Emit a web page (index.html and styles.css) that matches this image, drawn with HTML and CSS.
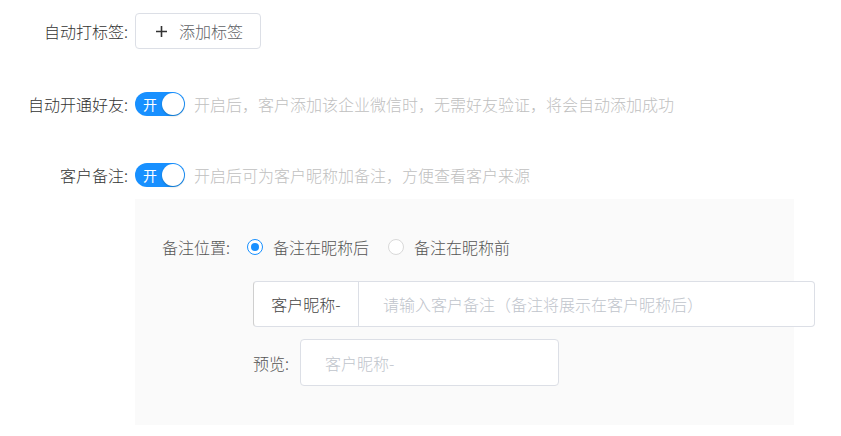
FILE: index.html
```html
<!DOCTYPE html>
<html lang="zh-CN">
<head>
<meta charset="utf-8">
<title>设置</title>
<link rel="stylesheet" href="styles.css">
</head>
<body>
<div class="form">
  <div class="item item-first">
    <div class="label">自动打标签:</div>
    <div class="content">
      <button class="btn" type="button">
        <svg class="plus" width="11" height="11" viewBox="0 0 11 11"><path d="M5.5 0V11M0 5.5H11" stroke="#333" stroke-width="1.6" fill="none"/></svg>
        <span>添加标签</span>
      </button>
    </div>
  </div>

  <div class="item item-second">
    <div class="label">自动开通好友:</div>
    <div class="content">
      <div class="line">
        <span class="switch"><span class="switch-text">开</span><span class="knob"></span></span>
        <span class="hint">开启后，客户添加该企业微信时，无需好友验证，将会自动添加成功</span>
      </div>
    </div>
  </div>

  <div class="item item-last">
    <div class="label">客户备注:</div>
    <div class="content">
      <div class="line">
        <span class="switch"><span class="switch-text">开</span><span class="knob"></span></span>
        <span class="hint">开启后可为客户昵称加备注，方便查看客户来源</span>
      </div>
      <div class="panel">
        <div class="radio-row">
          <span class="sub-label">备注位置:</span>
          <label class="radio checked"><span class="dot"></span><span>备注在昵称后</span></label>
          <label class="radio"><span class="dot"></span><span>备注在昵称前</span></label>
        </div>
        <div class="nested">
          <div class="group">
            <span class="addon">客户昵称-</span>
            <span class="group-input">请输入客户备注（备注将展示在客户昵称后）</span>
          </div>
          <div class="preview-row">
            <span class="preview-label">预览:</span>
            <span class="preview-input">客户昵称-</span>
          </div>
        </div>
      </div>
    </div>
  </div>
</div>
</body>
</html>
```

FILE: styles.css
```css
* { box-sizing: border-box; }
html, body {
  margin: 0;
  padding: 0;
  background: #fff;
  font-family: "Noto Sans CJK SC", "Noto Sans", sans-serif;
  font-size: 16px;
  font-weight: 300;
  color: #333;
  overflow: hidden;
}
.form {
  padding-top: 13px;
}
.item {
  display: flex;
  align-items: flex-start;
}
.item-first {
  margin-bottom: 37px;
}
.item-second {
  margin-bottom: 35px;
}
.item-last {
  margin-bottom: 0;
}
.label {
  width: 128px;
  text-align: right;
  height: 36px;
  line-height: 36px;
  color: #333;
  white-space: nowrap;
}
.content {
  margin-left: 7px;
}
.btn {
  display: flex;
  align-items: center;
  height: 36px;
  padding: 0 17px 0 20px;
  border: 1px solid #dcdfe6;
  border-radius: 4px;
  background: #fff;
  font-family: inherit;
  font-size: 16px;
  font-weight: 300;
  color: #606266;
  cursor: pointer;
}
.plus {
  margin-right: 12px;
}
.line {
  display: flex;
  align-items: center;
  height: 36px;
}
.switch {
  position: relative;
  display: inline-block;
  width: 50px;
  height: 24px;
  border-radius: 12px;
  background: #1890ff;
}
.switch-text {
  position: absolute;
  left: 8px;
  top: 0;
  line-height: 24px;
  font-size: 14px;
  font-weight: 400;
  color: #fff;
}
.knob {
  position: absolute;
  right: 1px;
  top: 1px;
  width: 22px;
  height: 22px;
  border-radius: 50%;
  background: #fff;
  box-shadow: 0 1px 2px rgba(0, 35, 11, 0.25);
}
.hint {
  margin-left: 9px;
  color: #c0c0c0;
  white-space: nowrap;
}
.panel {
  margin-top: 6px;
  width: 659px;
  height: 226px;
  background: #fafafa;
  padding: 30px 0 0 27px;
}
.radio-row {
  display: flex;
  align-items: center;
  height: 36px;
  color: #555;
}
.sub-label {
  width: 85px;
  white-space: nowrap;
}
.radio {
  display: flex;
  align-items: center;
  margin-right: 19px;
  white-space: nowrap;
}
.dot {
  position: relative;
  width: 16px;
  height: 16px;
  border: 1px solid #d9d9d9;
  border-radius: 50%;
  background: #fff;
  margin-right: 10px;
}
.radio.checked .dot {
  border-color: #1890ff;
}
.radio.checked .dot::after {
  content: "";
  position: absolute;
  left: 3px;
  top: 3px;
  width: 8px;
  height: 8px;
  border-radius: 50%;
  background: #1890ff;
}
.nested {
  margin-left: 91px;
  margin-top: 16px;
}
.group {
  display: flex;
  width: 562px;
  height: 46px;
  border: 1px solid #dcdfe6;
  border-left-color: #cfcfcf;
  border-radius: 4px;
  background: #fff;
}
.addon {
  display: flex;
  align-items: center;
  justify-content: center;
  width: 105px;
  border-right: 1px solid #dcdfe6;
  color: #444;
  white-space: nowrap;
}
.group-input {
  display: flex;
  align-items: center;
  padding-left: 24px;
  color: #c0c4cc;
  white-space: nowrap;
}
.preview-row {
  display: flex;
  align-items: center;
  margin-top: 12px;
}
.preview-label {
  width: 47px;
  color: #555;
  white-space: nowrap;
}
.preview-input {
  display: flex;
  align-items: center;
  width: 259px;
  height: 47px;
  padding-left: 24px;
  border: 1px solid #dcdfe6;
  border-radius: 4px;
  background: #fff;
  color: #c0c4cc;
}
```
